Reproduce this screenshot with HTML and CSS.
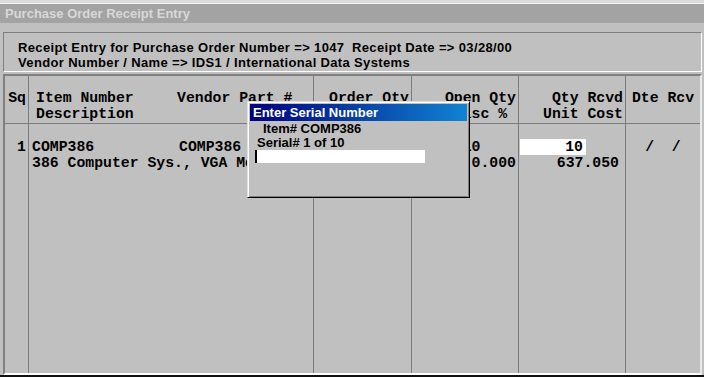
FILE: index.html
```html
<!DOCTYPE html>
<html>
<head>
    <title>Purchase Order Receipt Entry</title>
    <link rel="stylesheet" href="styles.css">
</head>
<body>
    <div class="screen">
        <div class="topEdge"></div>
        <div class="titleBar">Purchase Order Receipt Entry</div>

        <div class="infoPanel">
            <div class="infoLine">
                <span class="infoOrder">Receipt Entry for Purchase Order Number =&gt; 1047</span><span>Receipt Date =&gt; 03/28/00</span>
            </div>
            <div class="infoLine">Vendor Number / Name =&gt; IDS1 / International Data Systems</div>
        </div>

        <div class="grid">
            <div class="col colSq">
                <div class="headCell right">Sq</div>
                <div class="bodyCell right">1</div>
            </div>
            <div class="col colItem">
                <div class="headCell itemHead">
                    <div class="pair"><span class="itemNo">Item Number</span><span>Vendor Part #</span></div>
                    <div>Description</div>
                </div>
                <div class="bodyCell itemBody">
                    <div class="pair"><span class="itemNoData">COMP386</span><span>COMP386</span></div>
                    <div>386 Computer Sys., VGA Monitor</div>
                </div>
            </div>
            <div class="col colOrder">
                <div class="headCell right">Order Qty<br>Unit Price</div>
                <div class="bodyCell right">10<br>637.050</div>
            </div>
            <div class="col colOpen">
                <div class="headCell right">Open Qty<br>Disc %&nbsp;</div>
                <div class="bodyCell right">10&nbsp;&nbsp;&nbsp;&nbsp;<br>0.000</div>
            </div>
            <div class="col colRcvd">
                <div class="headCell right">Qty Rcvd<br>Unit Cost</div>
                <div class="bodyCell">
                    <div class="qtyInput">10</div>
                    <div class="cost">637.050</div>
                </div>
            </div>
            <div class="col colDate">
                <div class="headCell center">Dte Rcv</div>
                <div class="bodyCell center">/&nbsp;&nbsp;/</div>
            </div>
        </div>

        <!-- popup over the grid -->
        <div class="dialog">
            <div class="dialogTitle">Enter Serial Number</div>
            <div class="dialogItem">Item# COMP386</div>
            <div class="dialogSerial">Serial# 1 of 10</div>
            <div class="serialInput"></div>
        </div>

        <div class="bottomEdge"></div>
    </div>
</body>
</html>
```

FILE: styles.css
```css
body {
    margin: 0;
    padding: 0;
    background-color: #c0c0c0;
    font-family: "Liberation Sans", Arial, sans-serif;
}

.screen {
    position: relative;
    width: 704px;
    height: 377px;
    overflow: hidden;
    background-color: #c0c0c0;
}

.topEdge {
    height: 3px;
    background-color: #dcdcdc;
    border-bottom: 1px solid #f2f2f2;
}

.titleBar {
    height: 19px;
    line-height: 19px;
    padding-left: 5px;
    background-color: #a3a3a3;
    color: #d8d8d8;
    font-size: 13px;
    font-weight: bold;
}

.infoPanel {
    margin: 9px 2px 0 3px;
    padding: 7px 0 0 14px;
    height: 31px;
    border: 1px solid;
    border-color: #808080 #ffffff #ffffff #808080;
    font-size: 13px;
    font-weight: bold;
    letter-spacing: 0.35px;
    line-height: 15px;
    color: #000;
}

.infoOrder {
    display: inline-block;
    width: 334px;
}

.grid {
    display: flex;
    margin: 2px 2px 0 3px;
    height: 297px;
    border: 2px solid;
    border-color: #808080 #e8e8e8 #ffffff #808080;
    font-family: "Liberation Mono", "Courier New", monospace;
    font-size: 14.8px;
    font-weight: bold;
    line-height: 16px;
    color: #000;
    white-space: nowrap;
}

.col {
    display: flex;
    flex-direction: column;
    border-right: 1px solid #7c7c7c;
}

.colSq { width: 23px; }
.colItem { width: 284px; overflow: hidden; }
.colOrder { width: 97px; }
.colOpen { width: 106px; }
.colRcvd { width: 106px; }
.colDate { flex: 1; border-right: none; }

.headCell {
    height: 48px;
    box-sizing: border-box;
    padding-top: 14px;
    border-bottom: 1px solid #7c7c7c;
}

.bodyCell {
    flex: 1;
    padding-top: 15px;
}

.right {
    text-align: right;
    padding-right: 2px;
}

.center {
    text-align: center;
}

.itemHead {
    padding-left: 7px;
}

.itemBody {
    padding-left: 3px;
}

.pair {
    display: flex;
}

.itemNo {
    width: 141px;
}

.itemNoData {
    width: 147px;
}

.qtyInput {
    margin-left: 1px;
    width: 63px;
    padding-right: 3px;
    height: 16px;
    background-color: #ffffff;
    text-align: right;
}

.cost {
    text-align: right;
    padding-right: 6px;
}

.bottomEdge {
    height: 2px;
    background-color: #101010;
}

.dialog {
    position: absolute;
    left: 247px;
    top: 101px;
    width: 219px;
    height: 93px;
    background-color: #c0c0c0;
    border: 1px solid;
    border-color: #dfdfdf #000000 #000000 #dfdfdf;
    box-shadow: inset 1px 1px #ffffff, inset -1px -1px #808080;
    padding: 1px;
    font-size: 13px;
    font-weight: bold;
    color: #000;
}

.dialogTitle {
    height: 17px;
    line-height: 17px;
    margin: 1px 1px 0 1px;
    padding-left: 3px;
    background: linear-gradient(to right, #000080, #1084d0);
    color: #ffffff;
}

.dialogItem {
    margin-top: 1px;
    padding-left: 14px;
    line-height: 14px;
}

.dialogSerial {
    padding-left: 8px;
    line-height: 14px;
}

.serialInput {
    margin-left: 6px;
    width: 168px;
    height: 13px;
    background-color: #ffffff;
    border-left: 2px solid #000000;
}
```
